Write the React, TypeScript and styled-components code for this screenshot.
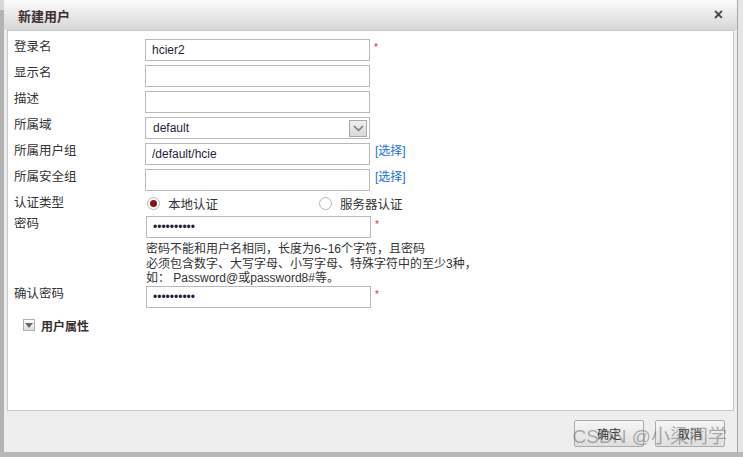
import React from "react";
import styled, { createGlobalStyle } from "styled-components";

const GlobalStyle = createGlobalStyle`
  html, body {
    margin: 0;
    padding: 0;
    width: 743px;
    height: 457px;
    overflow: hidden;
    background: #e6e6e6;
    font-family: "Liberation Sans", "Noto Sans CJK SC", Arial, sans-serif;
    font-size: 12px;
    color: #333;
  }
`;

const FIELDS = [
  { label: "登录名", value: "hcier2", required: true },
  { label: "显示名", value: "" },
  { label: "描述", value: "" },
];

const App = () => {
  return (
    <React.Fragment>
      <GlobalStyle />
      <Page>
        <MainRow>
          <LeftBar />
          <Dialog>
            <TitleBar>
              <Title>新建用户</Title>
              <Close>×</Close>
            </TitleBar>
            <Body>
              <Form>
                {FIELDS.map((f) => (
                  <React.Fragment key={f.label}>
                    <Label>{f.label}</Label>
                    <Field>
                      <Input defaultValue={f.value} />
                      {f.required && <Star>*</Star>}
                    </Field>
                  </React.Fragment>
                ))}

                <Label>所属域</Label>
                <Field>
                  <SelectBox>
                    <span>default</span>
                    <SelectArrow>
                      <svg width="11" height="7" viewBox="0 0 11 7">
                        <path d="M1 1 L5.5 5.5 L10 1" fill="none" stroke="#777" strokeWidth="1.5" />
                      </svg>
                    </SelectArrow>
                  </SelectBox>
                </Field>

                <Label>所属用户组</Label>
                <Field>
                  <Input defaultValue="/default/hcie" />
                  <PickLink>[选择]</PickLink>
                </Field>

                <Label>所属安全组</Label>
                <Field>
                  <Input defaultValue="" />
                  <PickLink>[选择]</PickLink>
                </Field>

                <Label>认证类型</Label>
                <RadioRow>
                  <RadioOption>
                    <Radio $checked />
                    本地认证
                  </RadioOption>
                  <RadioOption>
                    <Radio />
                    服务器认证
                  </RadioOption>
                </RadioRow>

                <Label>密码</Label>
                <Field>
                  <Input type="password" defaultValue="1234567890" $shift />
                  <Star>*</Star>
                </Field>

                <span />
                <Hint>
                  密码不能和用户名相同，长度为6~16个字符，且密码
                  <br />
                  必须包含数字、大写字母、小写字母、特殊字符中的至少3种，
                  <br />
                  如： Password@或password8#等。
                </Hint>

                <Label>确认密码</Label>
                <Field>
                  <Input type="password" defaultValue="1234567890" $shift />
                  <Star>*</Star>
                </Field>
              </Form>

              <Section>
                <Toggle>
                  <svg width="8" height="5" viewBox="0 0 8 5">
                    <path d="M0 0 H8 L4 5 Z" fill="#6a6a6a" />
                  </svg>
                </Toggle>
                用户属性
              </Section>
            </Body>
            <Footer>
              <Button>确定</Button>
              <Button>取消</Button>
            </Footer>
            <Watermark>CSDN @小梁同学</Watermark>
          </Dialog>
        </MainRow>
        <BottomBar />
      </Page>
    </React.Fragment>
  );
};

export default App;

const Page = styled.div`
  display: flex;
  flex-direction: column;
  width: 743px;
  height: 457px;
`;

const MainRow = styled.div`
  display: flex;
  height: 452px;
`;

const LeftBar = styled.div`
  width: 4px;
  background: linear-gradient(#d8d8d8 0, #d8d8d8 10px, #b3b3b3 10px);
`;

const Dialog = styled.div`
  position: relative;
  display: flex;
  flex-direction: column;
  width: 733px;
  background: #eeeeee;
  border-right: 1px solid #a8a8a8;
`;

const TitleBar = styled.div`
  display: flex;
  align-items: center;
  justify-content: space-between;
  height: 30px;
  padding: 0 14px 0 14px;
  background: linear-gradient(#fbfbfb, #d6d6d6);
`;

const Title = styled.div`
  font-size: 13px;
  font-weight: bold;
  color: #3d3030;
`;

const Close = styled.div`
  font-size: 16px;
  font-weight: bold;
  color: #444;
  line-height: 1;
`;

const Body = styled.div`
  box-sizing: border-box;
  height: 381px;
  margin: 0 3px;
  border: 1px solid #c8c8c8;
  background: #fff;
  padding: 8px 0 0 6px;
`;

const Form = styled.div`
  display: grid;
  grid-template-columns: 131px 1fr;
  row-gap: 4px;
  align-items: start;
`;

const Label = styled.div`
  line-height: 16px;
  font-size: 12.5px;
  color: #333;
`;

const Field = styled.div`
  display: flex;
  align-items: flex-start;
`;

const Input = styled.input<{ $shift?: boolean }>`
  box-sizing: border-box;
  width: 225px;
  height: 22px;
  margin: 0 0 0 ${(p) => (p.$shift ? "1px" : "0")};
  padding: 0 6px;
  border: 1px solid #b9b9b9;
  font-family: "Liberation Sans", "Noto Sans CJK SC", Arial, sans-serif;
  font-size: 12px;
  color: #1f1f3a;
  outline: none;
`;

const Star = styled.span`
  margin: 3px 0 0 4px;
  color: #e03030;
  font-size: 10px;
`;

const PickLink = styled.a`
  margin: 0 0 0 5px;
  line-height: 16px;
  color: #1a6fd8;
  cursor: pointer;
`;

const SelectBox = styled.div`
  box-sizing: border-box;
  display: flex;
  align-items: center;
  justify-content: space-between;
  width: 225px;
  height: 22px;
  padding: 0 2px 0 7px;
  border: 1px solid #b9b9b9;
  color: #1f1f3a;
`;

const SelectArrow = styled.div`
  box-sizing: border-box;
  display: flex;
  align-items: center;
  justify-content: center;
  width: 18px;
  height: 17px;
  border: 1px solid #a9a9a9;
  background: linear-gradient(#f0f0f0, #d8d8d8);
`;

const RadioRow = styled.div`
  display: flex;
  height: 17px;
  align-items: center;
`;

const RadioOption = styled.label`
  display: flex;
  align-items: center;
  gap: 8px;
  width: 170px;
  padding-left: 2px;
  font-size: 12.5px;
  color: #333;
`;

const Radio = styled.span<{ $checked?: boolean }>`
  box-sizing: border-box;
  display: inline-flex;
  align-items: center;
  justify-content: center;
  width: 13px;
  height: 13px;
  border: 1px solid #b5b5b5;
  border-radius: 50%;
  background: #fff;

  &::after {
    content: "";
    width: 7px;
    height: 7px;
    border-radius: 50%;
    background: ${(p) => (p.$checked ? "#8e1010" : "transparent")};
  }
`;

const Hint = styled.div`
  margin: 0 0 -4px 1px;
  line-height: 14.5px;
  color: #333;
  font-size: 12px;
`;

const Section = styled.div`
  display: flex;
  align-items: center;
  gap: 6px;
  margin: 9px 0 0 9px;
  font-weight: bold;
  color: #3a3030;
`;

const Toggle = styled.span`
  box-sizing: border-box;
  display: inline-flex;
  align-items: center;
  justify-content: center;
  width: 12px;
  height: 12px;
  border: 1px solid #b0b0b0;
  background: linear-gradient(#ffffff, #dcdcdc);
`;

const Footer = styled.div`
  display: flex;
  justify-content: flex-end;
  align-items: flex-start;
  gap: 11px;
  flex: 1;
  padding: 9px 12px 0 0;
`;

const Button = styled.button`
  box-sizing: border-box;
  width: 70px;
  height: 27px;
  border: 1px solid #ababab;
  border-radius: 2px;
  background: linear-gradient(#f6f6f6, #dedede);
  font-family: "Liberation Sans", "Noto Sans CJK SC", Arial, sans-serif;
  font-size: 12px;
  color: #333;
`;

const Watermark = styled.div`
  position: absolute;
  right: 10px;
  bottom: 4px;
  font-family: "Liberation Sans", "Noto Sans CJK SC", sans-serif;
  font-size: 19px;
  color: rgba(110, 110, 110, 0.55);
  pointer-events: none;
`;

const BottomBar = styled.div`
  height: 5px;
  background: #b8b8b8;
`;
